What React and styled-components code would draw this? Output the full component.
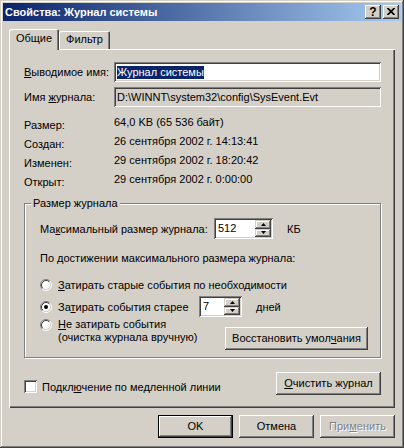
import React from 'react';
import styled, { createGlobalStyle, css } from 'styled-components';

const Global = createGlobalStyle`
  html, body { margin: 0; padding: 0; background: #d4d0c8; }
  body { font-family: "Liberation Sans", Arial, sans-serif; font-size: 11px; color: #000; }
  * { box-sizing: border-box; }
  u { text-decoration-thickness: 1px; text-underline-offset: 1px; }
`;

const raised = css`
  box-shadow: inset -1px -1px #404040, inset 1px 1px #fff, inset -2px -2px #808080, inset 2px 2px #d4d0c8;
`;
const sunken = css`
  box-shadow: inset 1px 1px #808080, inset -1px -1px #fff, inset 2px 2px #404040, inset -2px -2px #d4d0c8;
`;

const Window = styled.div`
  width: 404px;
  height: 448px;
  background: #d4d0c8;
  padding: 3px;
  display: flex;
  flex-direction: column;
  box-shadow: inset -1px -1px #404040, inset 1px 1px #d4d0c8, inset -2px -2px #808080, inset 2px 2px #fff;
`;

const TitleBar = styled.div`
  height: 18px;
  margin-bottom: 1px;
  display: flex;
  align-items: center;
  padding: 0 2px 0 2px;
  background: linear-gradient(to right, #0a246a, #a6caf0);
`;

const TitleText = styled.div`
  flex: 1;
  color: #fff;
  font-weight: bold;
  font-size: 11px;
  white-space: nowrap;
`;

const CapButton = styled.div`
  width: 16px;
  height: 14px;
  margin-left: ${(p) => p.$gap || 0}px;
  background: #d4d0c8;
  ${raised};
  display: flex;
  align-items: center;
  justify-content: center;
  font-weight: bold;
  font-size: 12px;
  line-height: 14px;
  padding-bottom: 1px;
`;

const Client = styled.div`
  flex: 1;
  display: flex;
  flex-direction: column;
  padding: 7px 6px 7px 6px;
`;

const TabRow = styled.div`
  height: 20px;
  display: flex;
  align-items: flex-end;
`;

const Tab = styled.div`
  position: relative;
  z-index: ${(p) => (p.$active ? 2 : 1)};
  width: ${(p) => p.$w}px;
  height: ${(p) => (p.$active ? 21 : 18)}px;
  margin-bottom: ${(p) => (p.$active ? -1 : 0)}px;
  background: #d4d0c8;
  border-top-left-radius: 2px;
  border-top-right-radius: 2px;
  box-shadow: inset 1px 1px #fff, inset -1px 0 #404040, inset -2px 0 #808080;
  display: flex;
  justify-content: center;
  padding-top: ${(p) => (p.$active ? 3 : 2)}px;
  line-height: 13px;
`;

const Panel = styled.div`
  flex: 1;
  background: #d4d0c8;
  box-shadow: inset 1px 1px #fff, inset -1px -1px #404040, inset -2px -2px #808080;
  padding: 13px 14px 0 15px;
  display: flex;
  flex-direction: column;
`;

const FieldRow = styled.div`
  display: grid;
  grid-template-columns: 90px 1fr;
  align-items: center;
  height: 20px;
  margin-top: ${(p) => p.$mt || 0}px;
`;

const Field = styled.div`
  height: 100%;
  background: ${(p) => (p.$disabled ? '#d4d0c8' : '#fff')};
  ${sunken};
  display: flex;
  align-items: center;
  padding: 0 2px 0 3px;
  white-space: nowrap;
  overflow: hidden;
`;

const Selected = styled.span`
  background: #0a246a;
  color: #fff;
  line-height: 13px;
`;

const InfoGrid = styled.div`
  margin-top: 6px;
  display: grid;
  grid-template-columns: 90px 1fr;
  grid-auto-rows: 19px;
`;

const InfoLabel = styled.div`
  padding-top: 3px;
  line-height: 18px;
`;

const InfoValue = styled.div`
  line-height: 18px;
`;

const Group = styled.div`
  position: relative;
  margin-top: 14px;
  border: 1px solid #808080;
  box-shadow: inset 1px 1px #fff, 1px 1px #fff;
  padding: 14px 12px 7px 15px;
  display: flex;
  flex-direction: column;
`;

const GroupCaption = styled.div`
  position: absolute;
  top: -8px;
  left: 6px;
  padding: 0 2px;
  line-height: 14px;
  background: #d4d0c8;
`;

const Row = styled.div`
  display: flex;
  align-items: ${(p) => p.$align || 'center'};
  justify-content: ${(p) => p.$justify || 'flex-start'};
  height: ${(p) => (p.$h ? `${p.$h}px` : 'auto')};
  margin-top: ${(p) => p.$mt || 0}px;
`;

const Text = styled.div`
  width: ${(p) => (p.$w ? `${p.$w}px` : 'auto')};
  margin-left: ${(p) => p.$ml || 0}px;
  line-height: ${(p) => p.$lh || 14}px;
  white-space: nowrap;
`;

const SpinBox = styled.div`
  width: ${(p) => p.$w}px;
  height: 21px;
  background: #fff;
  ${sunken};
  padding: 2px;
  display: flex;
`;

const SpinValue = styled.div`
  flex: 1;
  padding-left: 2px;
  line-height: 16px;
`;

const SpinButtons = styled.div`
  width: 16px;
  display: flex;
  flex-direction: column;
`;

const SpinBtn = styled.div`
  flex: 1;
  background: #d4d0c8;
  box-shadow: inset -1px -1px #404040, inset 1px 1px #d4d0c8, inset -2px -2px #808080, inset 2px 2px #fff;
  display: flex;
  align-items: center;
  justify-content: center;
`;

const RadioWrap = styled.div`
  width: 12px;
  height: 12px;
  flex: none;
  margin-right: 6px;
  margin-top: ${(p) => p.$mt || 0}px;
  display: flex;
`;

const CheckBox = styled.div`
  width: 13px;
  height: 13px;
  flex: none;
  background: #fff;
  ${sunken};
  margin-right: 5px;
`;

const Button = styled.div`
  width: ${(p) => p.$w}px;
  height: 23px;
  flex: none;
  margin-top: ${(p) => p.$mt || 0}px;
  background: #d4d0c8;
  ${(p) =>
    p.$default
      ? css`
          box-shadow: inset 0 0 0 1px #000, inset -2px -2px #404040, inset 2px 2px #fff, inset -3px -3px #808080,
            inset 3px 3px #d4d0c8;
        `
      : raised};
  display: flex;
  align-items: center;
  justify-content: center;
  line-height: 13px;
  color: ${(p) => (p.$disabled ? '#808080' : '#000')};
  text-shadow: ${(p) => (p.$disabled ? '1px 1px #fff' : 'none')};
  white-space: nowrap;
`;

const Footer = styled.div`
  margin-top: 7px;
  display: flex;
  justify-content: flex-end;
  gap: 6px;
`;

const TwoLine = styled.div`
  line-height: 13px;
  white-space: nowrap;
`;

function Radio({ checked, mt }) {
  return (
    <RadioWrap $mt={mt}>
      <svg width="12" height="12" viewBox="0 0 12 12">
        <circle cx="6" cy="6" r="4.5" fill="#fff" />
        <path d="M2.11 9.89 A5.5 5.5 0 0 1 9.89 2.11" fill="none" stroke="#808080" strokeWidth="1" />
        <path d="M9.89 2.11 A5.5 5.5 0 0 1 2.11 9.89" fill="none" stroke="#fff" strokeWidth="1" />
        <path d="M2.82 9.18 A4.5 4.5 0 0 1 9.18 2.82" fill="none" stroke="#404040" strokeWidth="1" />
        <path d="M9.18 2.82 A4.5 4.5 0 0 1 2.82 9.18" fill="none" stroke="#d4d0c8" strokeWidth="1" />
        {checked && <circle cx="6" cy="6" r="2" fill="#000" />}
      </svg>
    </RadioWrap>
  );
}

function Arrow({ down }) {
  return (
    <svg width="5" height="3" viewBox="0 0 5 3">
      <polygon points={down ? '0,0 5,0 2.5,3' : '0,3 5,3 2.5,0'} fill="#000" />
    </svg>
  );
}

function Spinner({ w, value }) {
  return (
    <SpinBox $w={w}>
      <SpinValue>{value}</SpinValue>
      <SpinButtons>
        <SpinBtn>
          <Arrow />
        </SpinBtn>
        <SpinBtn>
          <Arrow down />
        </SpinBtn>
      </SpinButtons>
    </SpinBox>
  );
}

export default function App() {
  return (
    <>
      <Global />
      <Window>
        <TitleBar>
          <TitleText>Свойства: Журнал системы</TitleText>
          <CapButton>?</CapButton>
          <CapButton $gap={2}>
            <svg width="8" height="7" viewBox="0 0 8 7">
              <path d="M0.5 0 L7.5 7 M7.5 0 L0.5 7" stroke="#000" strokeWidth="1.7" />
            </svg>
          </CapButton>
        </TitleBar>
        <Client>
          <TabRow>
            <Tab $active $w={50}>Общие</Tab>
            <Tab $w={51}>Фильтр</Tab>
          </TabRow>
          <Panel>
            <FieldRow>
              <div>
                <u>В</u>ыводимое имя:
              </div>
              <Field>
                <Selected>Журнал системы</Selected>
              </Field>
            </FieldRow>
            <FieldRow $mt={5}>
              <div>
                Имя <u>ж</u>урнала:
              </div>
              <Field $disabled>D:\WINNT\system32\config\SysEvent.Evt</Field>
            </FieldRow>
            <InfoGrid>
              <InfoLabel>Размер:</InfoLabel>
              <InfoValue>64,0 KB (65 536 байт)</InfoValue>
              <InfoLabel>Создан:</InfoLabel>
              <InfoValue>26 сентября 2002 г. 14:13:41</InfoValue>
              <InfoLabel>Изменен:</InfoLabel>
              <InfoValue>29 сентября 2002 г. 18:20:42</InfoValue>
              <InfoLabel>Открыт:</InfoLabel>
              <InfoValue>29 сентября 2002 г. 0:00:00</InfoValue>
            </InfoGrid>
            <Group>
              <GroupCaption>Размер журнала</GroupCaption>
              <Row $h={21}>
                <Text $w={174}>
                  Ма<u>к</u>симальный размер журнала:
                </Text>
                <Spinner w={59} value="512" />
                <Text $ml={14}>КБ</Text>
              </Row>
              <Row $mt={12}>
                <Text>По достижении максимального размера журнала:</Text>
              </Row>
              <Row $mt={13} $h={14}>
                <Radio />
                <Text>
                  <u>З</u>атирать старые события по необходимости
                </Text>
              </Row>
              <Row $mt={4} $h={21}>
                <Radio checked />
                <Text $w={141}>
                  За<u>т</u>ирать события старее
                </Text>
                <Spinner w={43} value="7" />
                <Text $ml={14}>дней</Text>
              </Row>
              <Row $mt={1} $align="flex-start" $justify="space-between">
                <Row $align="flex-start">
                  <Radio mt={1} />
                  <TwoLine>
                    <u>Н</u>е затирать события
                    <br />
                    (очистка журнала вручную)
                  </TwoLine>
                </Row>
                <Button $w={143} $mt={9}>
                  Восстановить умол<u>ч</u>ания
                </Button>
              </Row>
            </Group>
            <Row $mt={14} $align="flex-start" $justify="space-between">
              <Row $mt={8} $h={13}>
                <CheckBox />
                <Text>
                  Подкл<u>ю</u>чение по медленной линии
                </Text>
              </Row>
              <Button $w={105}>
                <u>О</u>чистить журнал
              </Button>
            </Row>
          </Panel>
          <Footer>
            <Button $w={75} $default>
              OK
            </Button>
            <Button $w={75}>Отмена</Button>
            <Button $w={75} $disabled>
              При<u>м</u>енить
            </Button>
          </Footer>
        </Client>
      </Window>
    </>
  );
}
